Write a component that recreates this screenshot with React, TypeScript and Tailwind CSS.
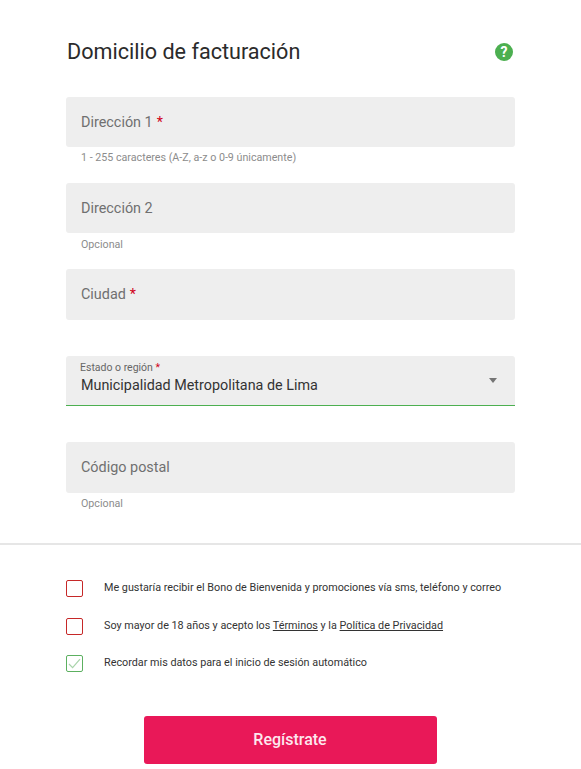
const font = { fontFamily: "Roboto, sans-serif" };

function Field({ label, required, hint, hClass, boxClass }: { label: string; required?: boolean; hint?: string; hClass: string; boxClass: string }) {
  return (
    <div className={hClass}>
      <div className={"flex items-center rounded-[3px] bg-[#eeeeee] px-[15px] pt-[1px] text-[14.4px] text-[#707070] " + boxClass}>
        <span>{label}</span>
        {required && <span className="ml-1 text-[#d0021b]">*</span>}
      </div>
      {hint && <p className="mt-[4px] px-[15px] text-[10.7px] leading-[13px] text-[#8c8c8c]">{hint}</p>}
    </div>
  );
}

function Check({ checked }: { checked?: boolean }) {
  return (
    <span
      className={
        "flex h-[17px] w-[17px] shrink-0 items-center justify-center rounded-[2px] border " +
        (checked ? "border-[#5cb060]" : "border-[#c62828]")
      }
    >
      {checked && (
        <svg width="13" height="11" viewBox="0 0 13 11" fill="none">
          <path d="M1 6l3.6 3.6L12 1.2" stroke="#a9d4ab" strokeWidth="1.2" />
        </svg>
      )}
    </span>
  );
}

export default function App() {
  return (
    <div className="h-[769px] w-[581px] overflow-hidden bg-white text-[#333]" style={font}>
      <div className="px-[66px] pt-[37px]">
        {/* Header */}
        <div className="flex h-[30px] items-center justify-between">
          <h1 className="ml-[1px] text-[21.6px] font-normal leading-[30px] text-[#2b2b2b]">Domicilio de facturación</h1>
          <span className="mr-[2px] flex h-[18px] w-[18px] items-center justify-center rounded-full bg-[#4caf50] text-[14px] font-bold leading-none text-white">
            ?
          </span>
        </div>

        <div className="mt-[30px]">
          <Field hClass="h-[86px]" boxClass="h-[50px]" label="Dirección 1" required hint="1 - 255 caracteres (A-Z, a-z o 0-9 únicamente)" />
          <Field hClass="h-[86px]" boxClass="h-[50px] mb-[5px]" label="Dirección 2" hint="Opcional" />
          <Field hClass="h-[87px]" boxClass="h-[51px]" label="Ciudad" required />

          {/* Select */}
          <div className="relative h-[49px] rounded-t-[3px] bg-[#eeeeee] px-[15px]">
            <div className="pt-[5px] text-[10.5px] leading-[13px] text-[#666]">
              <span className="-ml-[1px]">Estado o región</span> <span className="text-[#d0021b]">*</span>
            </div>
            <div className="mt-[3px] text-[14.35px] leading-[18px] text-[#333]">Municipalidad Metropolitana de Lima</div>
            <span className="absolute right-[18px] top-[22px] h-0 w-0 border-x-[4px] border-t-[5px] border-x-transparent border-t-[#757575]" />
          </div>
          <div className="h-px bg-[#4caf50]" />

          <div className="mt-[36px]">
            <Field hClass="h-[69px]" boxClass="h-[51px]" label="Código postal" hint="Opcional" />
          </div>
        </div>
      </div>

      <div className="mt-[32px] h-[2px] bg-[#e6e6e6]" />

      {/* Consents */}
      <div className="px-[66px] pt-[34px] text-[10.8px] leading-[14px] text-[#333]">
        <label className="flex h-[18px] items-center gap-[21px]">
          <Check />
          <span>Me gustaría recibir el Bono de Bienvenida y promociones vía sms, teléfono y correo</span>
        </label>
        <label className="mt-[20px] flex h-[18px] items-center gap-[21px]">
          <Check />
          <span>
            Soy mayor de 18 años y acepto los <a className="underline">Términos</a> y la{" "}
            <a className="underline">Política de Privacidad</a>
          </span>
        </label>
        <label className="mt-[19px] flex h-[18px] items-center gap-[21px]">
          <Check checked />
          <span>Recordar mis datos para el inicio de sesión automático</span>
        </label>
      </div>

      <div className="mt-[44px] flex justify-center">
        <button className="ml-[-1px] h-[48px] w-[293px] rounded-[3px] bg-[#e91858] text-[16px] font-medium text-[#fde7ee]">
          Regístrate
        </button>
      </div>
    </div>
  );
}
